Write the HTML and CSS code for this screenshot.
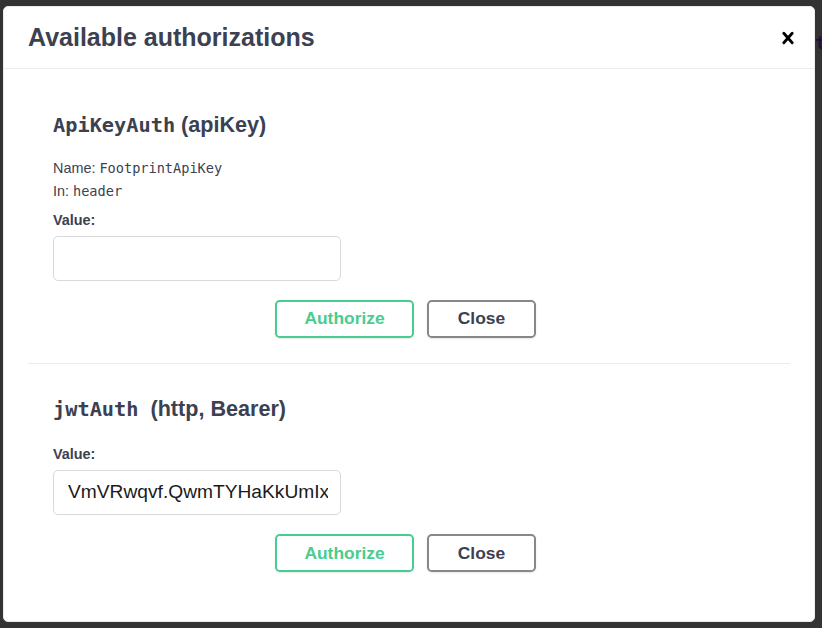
FILE: index.html
```html
<!DOCTYPE html>
<html lang="en">
<head>
<meta charset="utf-8">
<title>Available authorizations</title>
<link rel="stylesheet" href="styles.css">
</head>
<body>
<div class="backdrop">
  <span class="behind-text">t</span>
  <div class="modal" role="dialog">
    <div class="modal-header">
      <h3 class="modal-title">Available authorizations</h3>
      <button class="close-modal" aria-label="Close">
        <svg width="24" height="24" viewBox="0 0 20 20" aria-hidden="true"><path fill="#000" d="M14.348 14.849a1.2 1.2 0 0 1-1.697 0L10 11.819l-2.651 3.029a1.2 1.2 0 1 1-1.697-1.697l2.758-3.15-2.759-3.152a1.2 1.2 0 1 1 1.697-1.697L10 8.183l2.651-3.031a1.2 1.2 0 1 1 1.697 1.697l-2.758 3.152 2.758 3.15a1.2 1.2 0 0 1 0 1.698z"/></svg>
      </button>
    </div>
    <div class="modal-content">
      <div class="auth">
        <h4 class="auth-title"><code>ApiKeyAuth</code>&nbsp;(apiKey)</h4>
        <p class="meta">Name: <code>FootprintApiKey</code></p>
        <p class="meta">In: <code>header</code></p>
        <label class="field-label">Value:</label>
        <input class="field-input" type="text" value="">
        <div class="btn-row">
          <button class="btn btn-authorize">Authorize</button>
          <button class="btn btn-close">Close</button>
        </div>
      </div>
      <div class="auth auth-jwt">
        <h4 class="auth-title"><code>jwtAuth</code>&nbsp; (http, Bearer)</h4>
        <label class="field-label">Value:</label>
        <input class="field-input" type="text" value="VmVRwqvf.QwmTYHaKkUmIxZpQeR3sLtN">
        <div class="btn-row">
          <button class="btn btn-authorize">Authorize</button>
          <button class="btn btn-close">Close</button>
        </div>
      </div>
    </div>
  </div>
</div>
</body>
</html>
```
FILE: styles.css
```css
html, body {
  margin: 0;
  padding: 0;
}

body {
  background: #333333;
  width: 822px;
  height: 628px;
  overflow: hidden;
  font-family: "Liberation Sans", Arial, sans-serif;
  color: #3b4151;
}

.backdrop {
  position: relative;
  padding: 6px 7px 6px 3px;
}

.behind-text {
  position: absolute;
  left: 815px;
  top: 33px;
  font: 700 18px/20px "DejaVu Sans Mono", monospace;
  color: #1e1433;
}

.modal {
  position: relative;
  width: 812px;
  height: 616px;
  box-sizing: border-box;
  background: #ffffff;
  border: 1px solid #ebebeb;
  border-radius: 5px;
  overflow: hidden;
}

.modal-header {
  display: flex;
  align-items: center;
  height: 61px;
  border-bottom: 1px solid #ebebeb;
}

.modal-title {
  flex: 1;
  margin: 0;
  padding: 0 24px;
  font-size: 25px;
  line-height: 28px;
  font-weight: 700;
  color: #3b4151;
  margin-top: -1px;
}

.close-modal {
  background: none;
  border: none;
  padding: 0 14px 0 0;
  margin: 0;
  display: flex;
  align-items: center;
  cursor: pointer;
}

.modal-content {
  padding: 24px 24px 0;
}

.auth {
  padding: 12px 24px 25px 25px;
  border-bottom: 1px solid #ebebeb;
}

.auth-jwt {
  margin-top: 13px;
  border-bottom: none;
}

.auth-title {
  margin: 7px 0 19px;
  font-size: 21.6px;
  line-height: 25px;
  font-weight: 700;
  color: #3b4151;
}

.auth-title code {
  font-family: "DejaVu Sans Mono", monospace;
  font-size: 20.3px;
  font-weight: 700;
}

.meta {
  margin: 0;
  font-size: 14.4px;
  line-height: 23.3px;
  color: #3b4151;
}

.meta code {
  font-family: "DejaVu Sans Mono", monospace;
  font-size: 13.6px;
}

.field-label {
  display: block;
  margin-top: 7.4px;
  font-size: 14.4px;
  line-height: 18px;
  font-weight: 700;
  color: #3b4151;
}

.auth-jwt .field-label {
  margin-top: 23px;
}

.field-input {
  display: block;
  box-sizing: border-box;
  width: 288px;
  height: 45px;
  margin-top: 7px;
  padding: 0 12px 0 14px;
  border: 1px solid #d9d9d9;
  border-radius: 5px;
  background: #ffffff;
  font-family: "Liberation Sans", Arial, sans-serif;
  font-size: 19.2px;
  color: #1a1a1a;
  outline: none;
}

.btn-row {
  display: flex;
  justify-content: center;
  gap: 13px;
  margin-top: 19px;
  padding-right: 8px;
}

.auth-jwt .btn-row {
  margin-top: 19.5px;
}

.btn {
  box-sizing: border-box;
  height: 38px;
  padding: 0;
  background: #ffffff;
  border: 2px solid #888888;
  border-radius: 4.8px;
  box-shadow: 0 1px 2px rgba(0, 0, 0, 0.1);
  font-family: "Liberation Sans", Arial, sans-serif;
  font-size: 17.4px;
  font-weight: 700;
  color: #3b4151;
  text-align: center;
  cursor: pointer;
}

.btn-authorize {
  width: 139px;
  border-color: #49cc90;
  color: #49cc90;
}

.btn-close {
  width: 109px;
}
```
